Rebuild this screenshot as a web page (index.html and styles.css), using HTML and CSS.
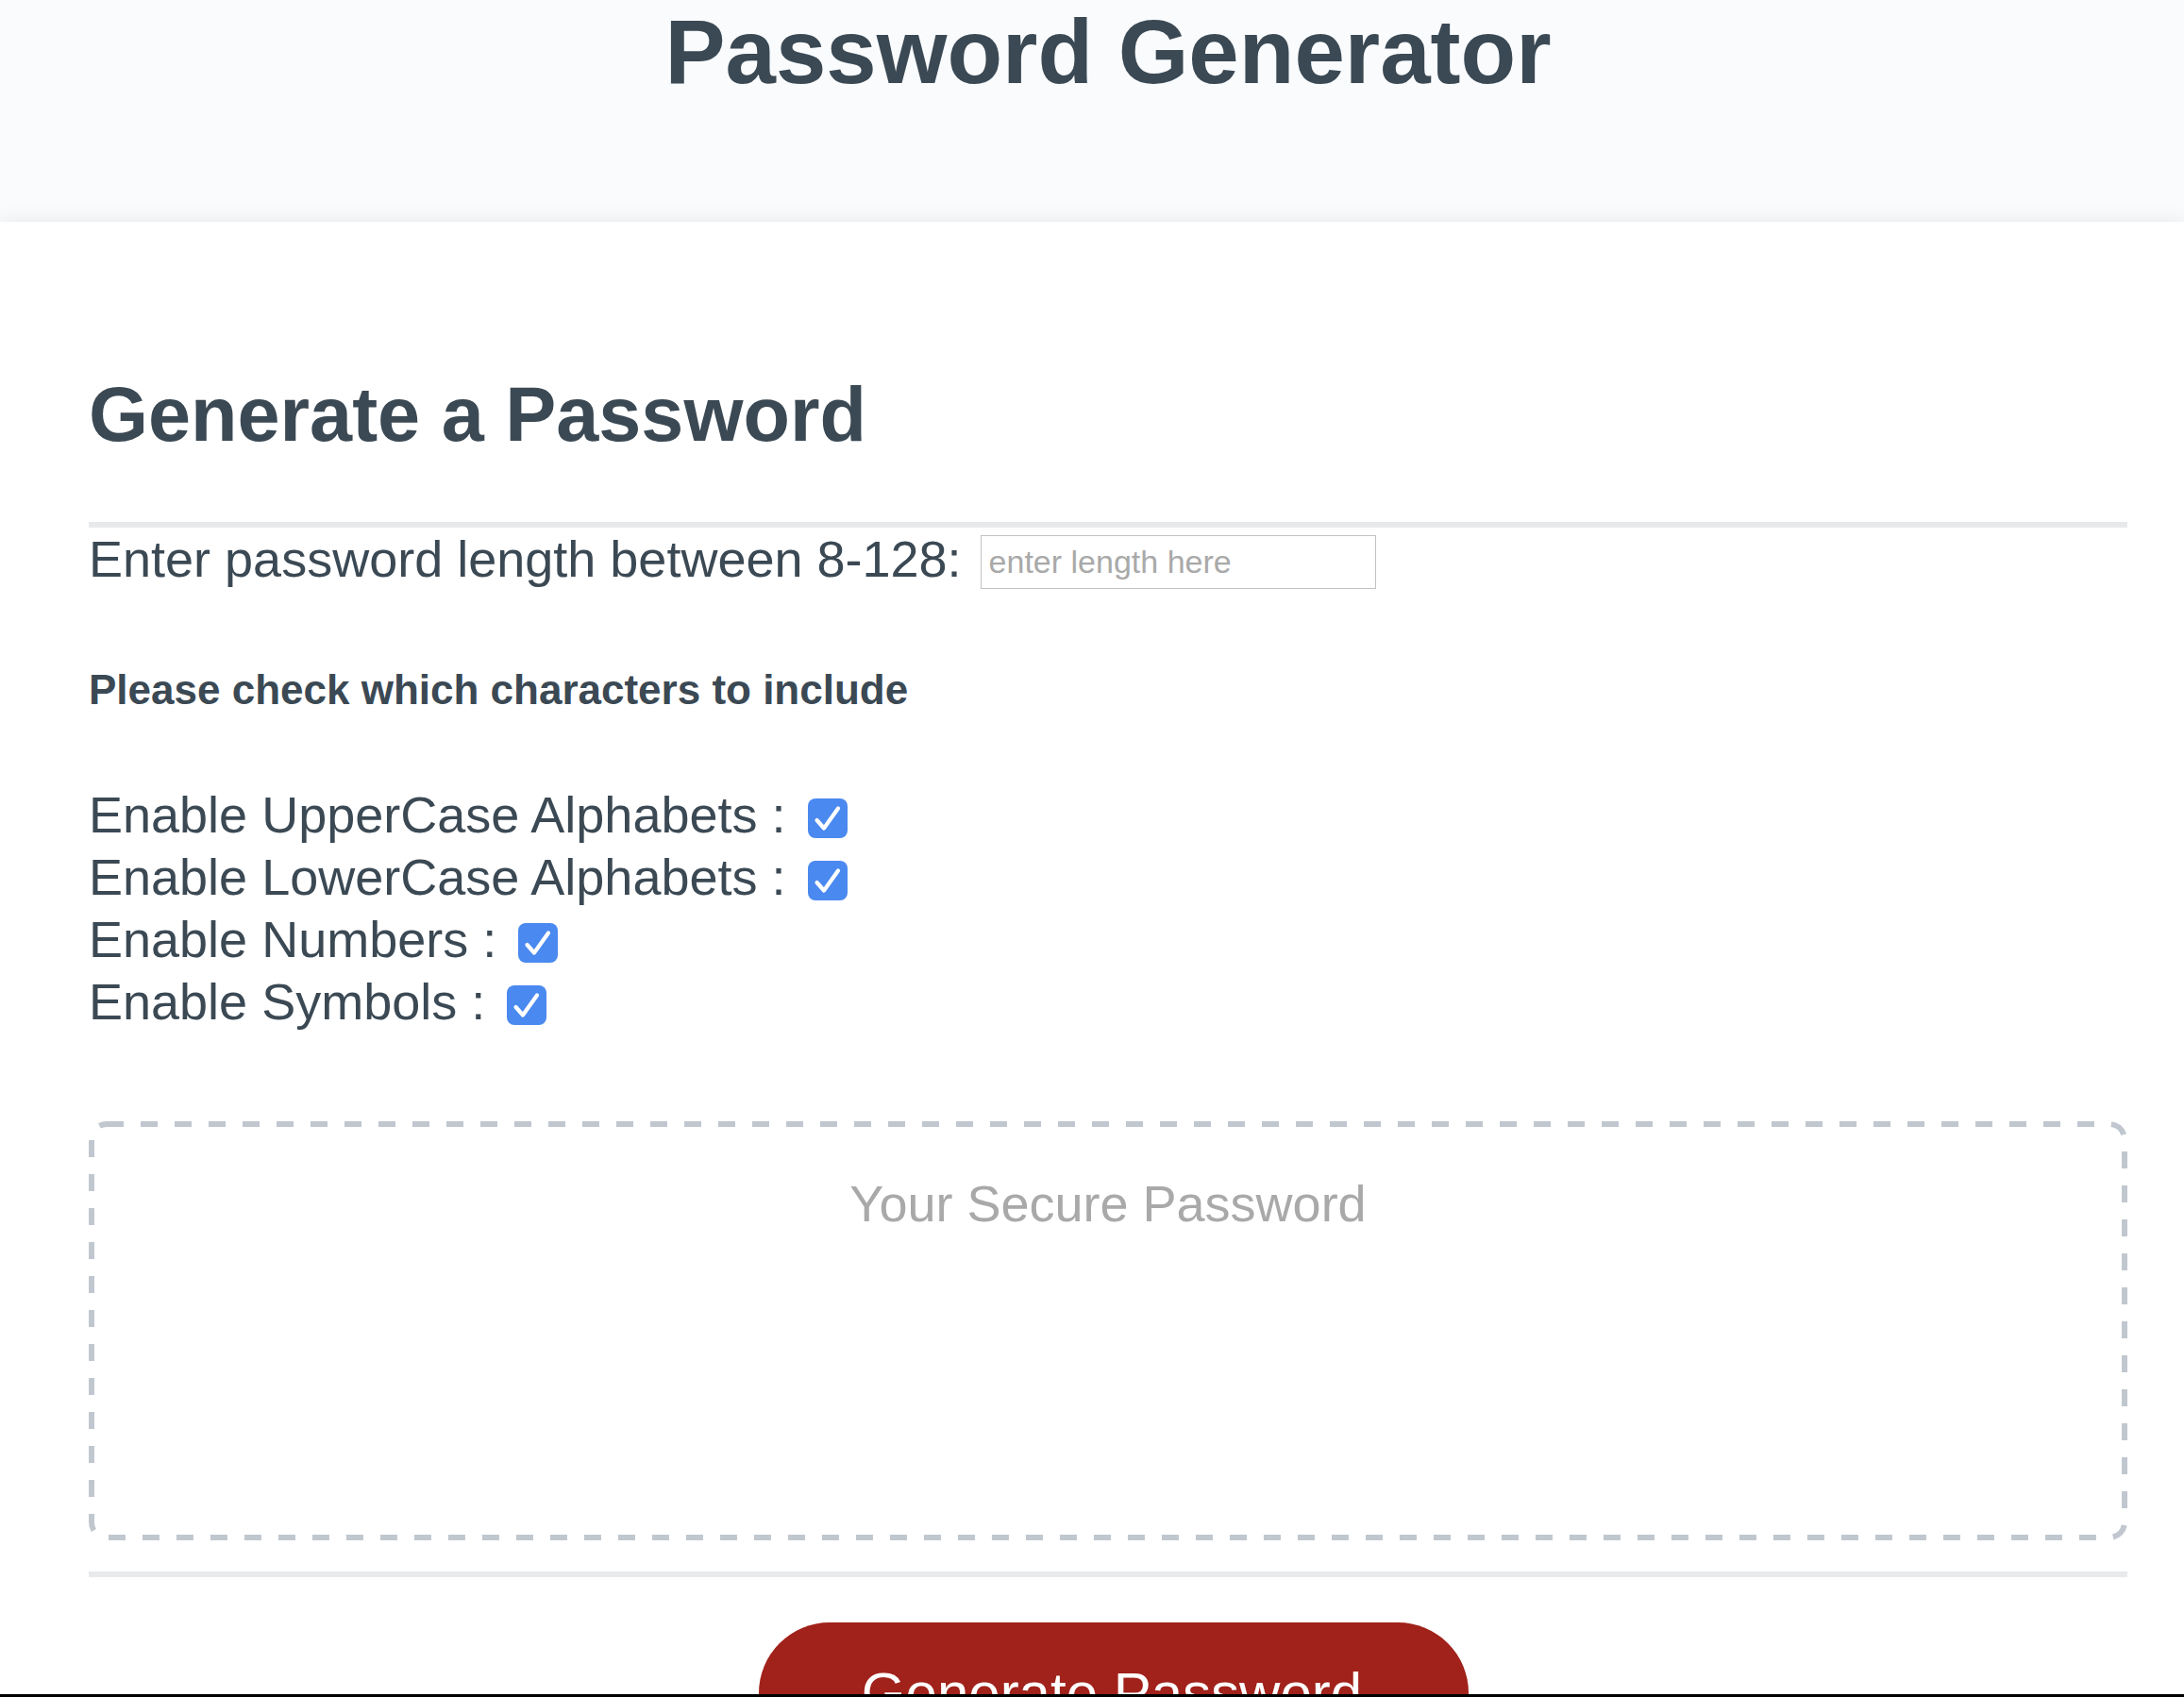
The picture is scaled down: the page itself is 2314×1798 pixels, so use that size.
FILE: index.html
```html
<!DOCTYPE html>
<html lang="en">
<head>
<meta charset="utf-8">
<title>Password Generator</title>
<link rel="stylesheet" href="styles.css">
</head>
<body>
<header class="site-header">
  <div class="header-inner">
    <h1 class="title">Password Generator</h1>
  </div>
</header>
<main class="card">
  <div class="card-header">
    <h2 class="card-title">Generate a Password</h2>
  </div>
  <div class="rule"></div>
  <div class="card-body">
    <div class="length-row">Enter password length between 8-128: <input class="length-input" type="text" placeholder="enter length here"></div>
    <h5 class="prompt">Please check which characters to include</h5>
    <div class="options">
      <div class="option">Enable UpperCase Alphabets : <span class="check"><svg viewBox="0 0 42 42" width="42" height="42"><path d="M9.5 23 L17 31.5 L32 10.5" fill="none" stroke="#fff" stroke-width="4.2" stroke-linecap="round" stroke-linejoin="round"/></svg></span></div>
      <div class="option">Enable LowerCase Alphabets : <span class="check"><svg viewBox="0 0 42 42" width="42" height="42"><path d="M9.5 23 L17 31.5 L32 10.5" fill="none" stroke="#fff" stroke-width="4.2" stroke-linecap="round" stroke-linejoin="round"/></svg></span></div>
      <div class="option">Enable Numbers : <span class="check"><svg viewBox="0 0 42 42" width="42" height="42"><path d="M9.5 23 L17 31.5 L32 10.5" fill="none" stroke="#fff" stroke-width="4.2" stroke-linecap="round" stroke-linejoin="round"/></svg></span></div>
      <div class="option">Enable Symbols : <span class="check"><svg viewBox="0 0 42 42" width="42" height="42"><path d="M9.5 23 L17 31.5 L32 10.5" fill="none" stroke="#fff" stroke-width="4.2" stroke-linecap="round" stroke-linejoin="round"/></svg></span></div>
    </div>
    <div class="password-wrap">
      <textarea class="password" readonly placeholder="Your Secure Password" aria-label="Generated Password"></textarea>
      <svg class="password-border" width="2160" height="444" viewBox="0 0 2160 444" aria-hidden="true"><rect x="3" y="3" width="2154" height="438" rx="16" ry="16" fill="none" stroke="#c0c7cf" stroke-width="6" stroke-dasharray="18 18"/></svg>
    </div>
  </div>
  <div class="rule footer-rule"></div>
  <div class="card-footer">
    <button class="btn" type="button">Generate Password</button>
  </div>
</main>
<div class="window-edge"></div>
</body>
</html>
```

FILE: styles.css
```css
*, *::before, *::after {
  box-sizing: border-box;
}

html, body {
  margin: 0;
  padding: 0;
  overflow: hidden;
  height: 100%;
}

body {
  font-family: "Liberation Sans", Arial, Helvetica, sans-serif;
  background: #ffffff;
  color: #3b4954;
}

.site-header {
  background: #f9fbfd;
  height: 235px;
}

.header-inner {
  margin-left: 94px;
  width: 2160px;
  text-align: center;
}

.title {
  margin: 0;
  font-size: 96px;
  line-height: 110px;
  font-weight: 700;
  color: #3b4954;
}

.card {
  display: block;
  background: #ffffff;
  box-shadow: rgba(0, 0, 0, 0.15) 0 6px 24px 0;
  padding: 90px 60px 200px 94px;
  font-size: 54px;
  color: #3b4954;
}

.card-title {
  margin: 68px 0 67px;
  font-size: 81px;
  line-height: 93px;
  font-weight: 700;
}

.rule {
  height: 6px;
  background: #e7e9eb;
}

.length-row {
  margin-top: 2px;
  line-height: 62px;
  white-space: nowrap;
}

.length-input {
  font-family: "Liberation Sans", Arial, Helvetica, sans-serif;
  font-size: 34px;
  width: 419px;
  height: 57px;
  margin-left: 5px;
  padding: 0 8px;
  border: 1px solid #c3c3c3;
  border-radius: 0;
  background: #fff;
  color: #3b4954;
  vertical-align: 4px;
  outline: none;
}

.length-input::placeholder {
  color: #a9a9a9;
}

.prompt {
  margin: 81px 0 0;
  font-size: 44px;
  line-height: 51px;
  font-weight: 700;
}

.options {
  margin-top: 74px;
}

.option {
  line-height: 66px;
  white-space: nowrap;
}

.check {
  display: inline-block;
  width: 42px;
  height: 42px;
  margin-left: 8px;
  border-radius: 8px;
  background: #4a89f0;
  vertical-align: -6px;
}

.check svg {
  display: block;
}

.password-wrap {
  position: relative;
  margin-top: 94px;
  width: 2160px;
  height: 444px;
}

.password {
  display: block;
  width: 100%;
  height: 444px;
  padding: 50px 45px;
  font-family: "Liberation Sans", Arial, Helvetica, sans-serif;
  font-size: 54px;
  line-height: 62px;
  text-align: center;
  color: #3b4954;
  background: #fff;
  border: 6px solid transparent;
  border-radius: 18px;
  resize: none;
  overflow: hidden;
  outline: none;
}

.password::placeholder {
  color: #a9a9a9;
}

.password-border {
  position: absolute;
  left: 0;
  top: 0;
  pointer-events: none;
}

.footer-rule {
  margin-top: 33px;
}

.card-footer {
  text-align: center;
}

.btn {
  display: inline-block;
  margin: 48px 48px 48px 60px;
  padding: 42px 113px 42px 109px;
  border: none;
  border-radius: 75px;
  background: #a0221a;
  color: #ffffff;
  font-family: "Liberation Sans", Arial, Helvetica, sans-serif;
  font-size: 60px;
  line-height: 66px;
  cursor: pointer;
}

.window-edge {
  position: fixed;
  left: 0;
  right: 0;
  bottom: 0;
  height: 3px;
  background: #000;
}
```
